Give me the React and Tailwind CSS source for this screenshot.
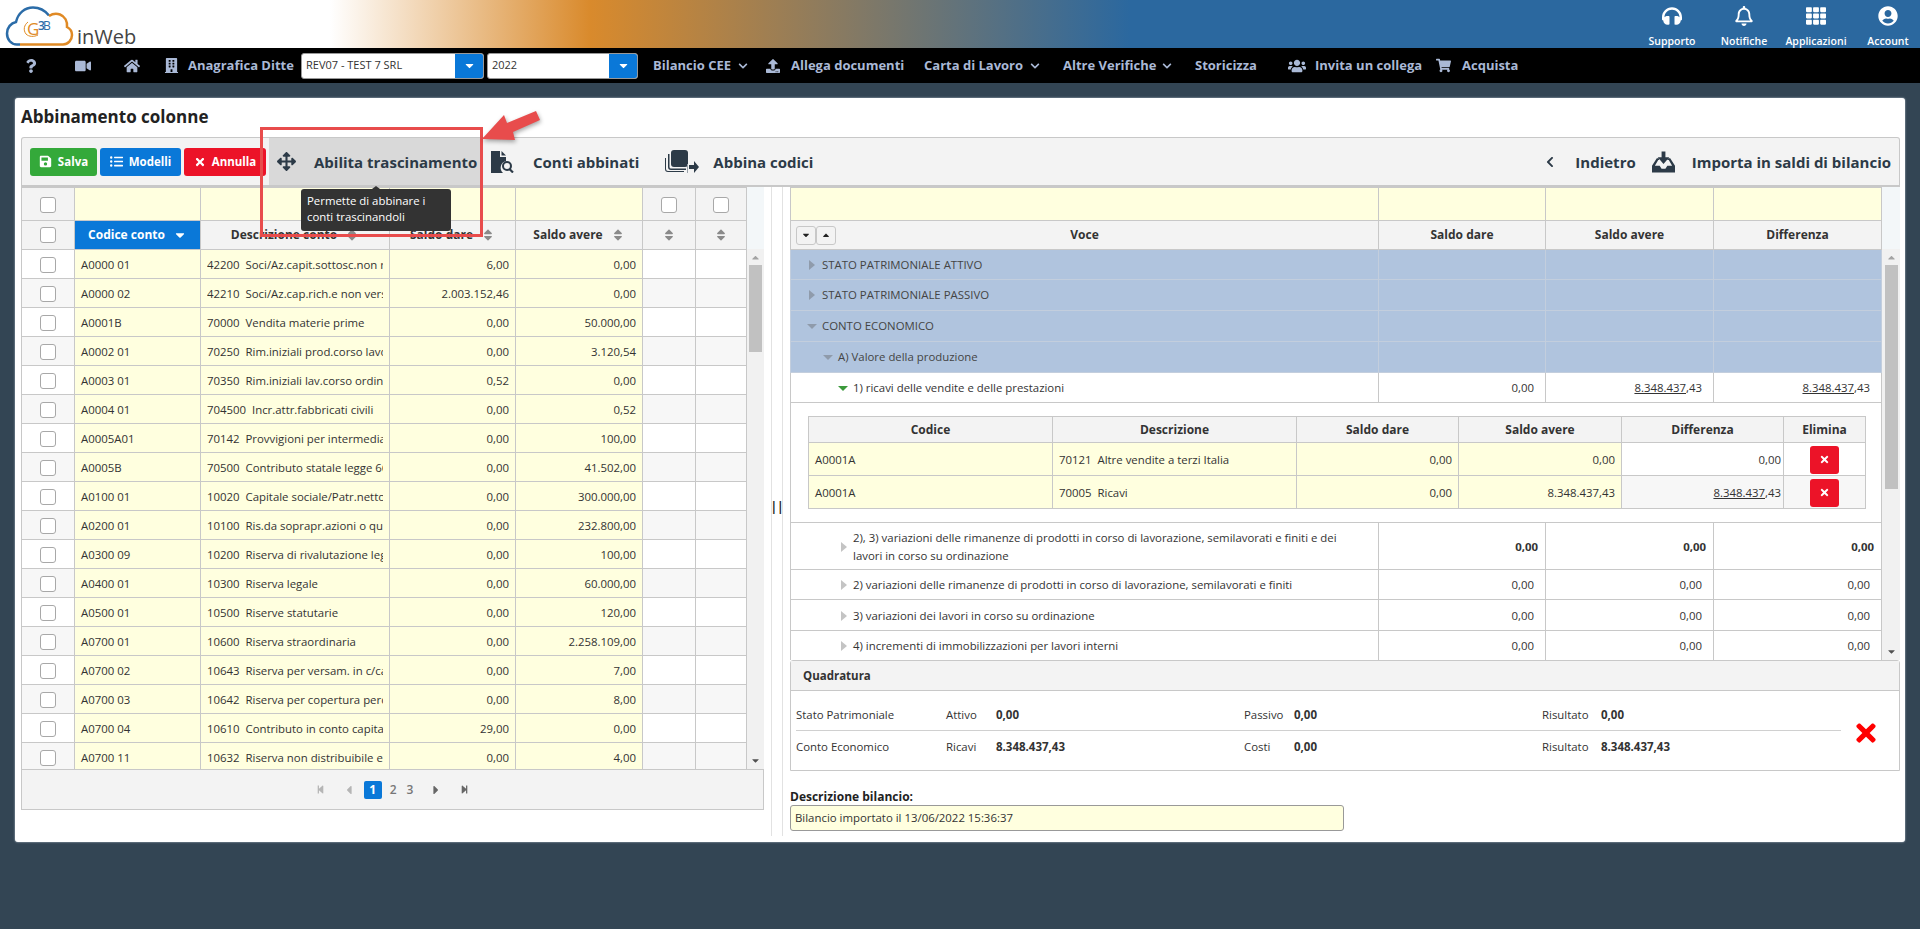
import {
  FaRegBell,
  FaBuilding,
  FaCaretDown,
  FaCaretLeft,
  FaCaretRight,
  FaCaretUp,
  FaChevronDown,
  FaChevronLeft,
  FaHome,
  FaQuestion,
  FaSave,
  FaShoppingCart,
  FaSort,
  FaStepBackward,
  FaStepForward,
  FaTh,
  FaTimes,
  FaUpload,
  FaUserCircle,
  FaUsers,
  FaVideo,
  FaListUl,
  FaArrowsAlt,
  FaHeadphones,
} from "react-icons/fa";

const accounts = [
  ["A0000 01", "42200  Soci/Az.capit.sottosc.non richiamato", "6,00", "0,00"],
  ["A0000 02", "42210  Soci/Az.cap.rich.e non versato", "2.003.152,46", "0,00"],
  ["A0001B", "70000  Vendita materie prime", "0,00", "50.000,00"],
  ["A0002 01", "70250  Rim.iniziali prod.corso lavorazione", "0,00", "3.120,54"],
  ["A0003 01", "70350  Rim.iniziali lav.corso ordinazione", "0,52", "0,00"],
  ["A0004 01", "704500  Incr.attr.fabbricati civili", "0,00", "0,52"],
  ["A0005A01", "70142  Provvigioni per intermediazione", "0,00", "100,00"],
  ["A0005B", "70500  Contributo statale legge 662", "0,00", "41.502,00"],
  ["A0100 01", "10020  Capitale sociale/Patr.netto", "0,00", "300.000,00"],
  ["A0200 01", "10100  Ris.da soprapr.azioni o quote", "0,00", "232.800,00"],
  ["A0300 09", "10200  Riserva di rivalutazione legge", "0,00", "100,00"],
  ["A0400 01", "10300  Riserva legale", "0,00", "60.000,00"],
  ["A0500 01", "10500  Riserve statutarie", "0,00", "120,00"],
  ["A0700 01", "10600  Riserva straordinaria", "0,00", "2.258.109,00"],
  ["A0700 02", "10643  Riserva per versam. in c/capitale", "0,00", "7,00"],
  ["A0700 03", "10642  Riserva per copertura perdite", "0,00", "8,00"],
  ["A0700 04", "10610  Contributo in conto capitale", "29,00", "0,00"],
  ["A0700 11", "10632  Riserva non distribuibile ex", "0,00", "4,00"],
];

const sections = [
  { label: "STATO PATRIMONIALE ATTIVO", pad: "pl-[31px]", open: false, h: "h-[30px]" },
  { label: "STATO PATRIMONIALE PASSIVO", pad: "pl-[31px]", open: false, h: "h-[31px]" },
  { label: "CONTO ECONOMICO", pad: "pl-[31px]", open: true, h: "h-[31px]" },
  { label: "A) Valore della produzione", pad: "pl-[47px]", open: true, h: "h-[31px]" },
];

const subRows = [
  { label: "2) variazioni delle rimanenze di prodotti in corso di lavorazione, semilavorati e finiti", h: "h-[30px]" },
  { label: "3) variazioni dei lavori in corso su ordinazione", h: "h-[31px]" },
  { label: "4) incrementi di immobilizzazioni per lavori interni", h: "h-[30px]" },
];

const Checkbox = () => (
  <span className="mx-auto block h-4 w-4 rounded-[3px] border border-[#a8a8a8] bg-white" />
);

const SortIcon = () => <FaSort className="shrink-0 text-[14px] text-[#8a8a8a]" />;

const Logo = () => (
  <div className="flex h-12 w-[150px] items-end">
    <svg viewBox="0 0 76 48" className="h-12 w-[76px] shrink-0">
      <path
        d="M20 44.500h-3C11 44.500 7 39.500 7 33.500c0-6 4-10.500 9-11.500C18 13 25 7.500 33 7.500c7 0 12 3 16 8"
        fill="none"
        stroke="#2b6ca8"
        strokeWidth="2.500"
      />
      <path
        d="M49 16c3-2 7-3 11-1.500 5 2 7.500 7 7 12.500 3 1.500 5 4.500 5 8 0 5-4 9.500-9 9.500H20"
        fill="none"
        stroke="#e08a25"
        strokeWidth="2.500"
      />
      <path d="M28 22c-4 3-5 8-2 12 3 3 8 3 12 1" fill="none" stroke="#e08a25" strokeWidth="1" />
      <text x="27" y="35" fontSize="17" fontFamily="Open Sans" fill="#e08a25">G</text>
      <text x="38" y="30" fontSize="12" fontWeight="600" fontFamily="Open Sans" fill="#2b6ca8">3</text>
      <text x="43" y="30" fontSize="12" fontFamily="Open Sans" fill="#2b6ca8">B</text>
    </svg>
    <span className="mb-[-1px] ml-[1px] text-[20px] leading-6 text-[#444]">inWeb</span>
  </div>
);

const TopAction = ({ icon, label }) => (
  <div className="flex w-16 flex-col items-center text-white">
    <span className="flex h-[22px] items-center text-[20px]">{icon}</span>
    <span className="mt-[6px] whitespace-nowrap text-[10.5px] font-semibold leading-4">{label}</span>
  </div>
);

const NavText = ({ className = "", children }) => (
  <span className={`whitespace-nowrap text-[13px] font-bold text-[#aab9d6] ${className}`}>{children}</span>
);

const Select = ({ value, width }) => (
  <div className={`flex h-[26px] ${width} overflow-hidden rounded-[3px] border border-[#999] bg-white`}>
    <span className="flex-1 self-center pl-[4px] text-[11px] text-[#333]">{value}</span>
    <span className="flex w-[28px] items-center justify-center bg-[#0a78d8] text-[13px] text-white">
      <FaCaretDown />
    </span>
  </div>
);

const ToolButton = ({ color, width, icon, children }) => (
  <button
    type="button"
    className={`flex h-7 ${width} items-center justify-center gap-[6px] rounded-[3px] text-[11.5px] font-bold text-white ${color}`}
  >
    {icon}
    {children}
  </button>
);

const ToolLink = ({ children, className = "" }) => (
  <span className={`mt-[2px] whitespace-nowrap text-[15px] font-bold text-[#2c3a47] ${className}`}>{children}</span>
);

const FileSearchIcon = () => (
  <svg viewBox="0 0 24 22" className="h-[22px] w-6 shrink-0 fill-[#2c3a47]">
    <path d="M0 0h9v6h6v4a7 7 0 0 0-3 12H0z" />
    <path d="M10.500 0v4.500H15z" />
    <circle cx="16" cy="15" r="4" fill="none" stroke="#2c3a47" strokeWidth="2" />
    <path d="M18.500 18l3.500 3.500" stroke="#2c3a47" strokeWidth="2.200" />
  </svg>
);

const CopyArrowIcon = () => (
  <svg viewBox="0 0 34 24" className="h-6 w-[34px] shrink-0 fill-[#2c3a47]">
    <rect x="6" y="0" width="17" height="17" rx="3" />
    <path d="M3 4v13a3 3 0 0 0 3 3h15v-1.500H6A1.500 1.500 0 0 1 4.500 17V4z" />
    <path d="M0 8v11a3 3 0 0 0 3 3h16v-1H3a2 2 0 0 1-2-2V8z" />
    <rect x="22" y="14" width="1" height="9" fill="#9aa2aa" />
    <path d="M24 15h5v-4l5 6-5 6v-4h-5z" />
  </svg>
);

const InboxInIcon = () => (
  <svg viewBox="0 0 24 22" className="h-[22px] w-[23px] shrink-0 fill-[#2c3a47]">
    <path d="M10 0h4v6h4l-6 7-6-7h4z" />
    <path d="M5 7h2.500v2H6.500L3 15h5l2 3h4l2-3h5l-3.500-6H16V7h3l5 8v7H0v-7z" />
  </svg>
);

const Scrollbar = ({ width, thumb }) => (
  <div className={`flex ${width} shrink-0 flex-col`}>
    <div className="h-[62px] bg-[#f3f7f9]" />
    <div className="flex flex-1 flex-col items-center bg-[#f1f1f1]">
      <FaCaretUp className="mt-[3px] h-[11px] text-[11px] text-[#a3a3a3]" />
      <div className={`mt-[2px] w-[13px] ${thumb} bg-[#c1c1c1]`} />
      <FaCaretDown className="mb-[3px] mt-auto h-[11px] text-[11px] text-[#505050]" />
    </div>
  </div>
);

// small tree arrows, drawn with borders like the jQuery treegrid ones
const TreeRight = ({ className = "" }) => (
  <span className={`absolute h-0 w-0 border-y-[5px] border-l-[6px] border-y-transparent ${className}`} />
);

const TreeDown = ({ className = "" }) => (
  <span className={`absolute h-0 w-0 border-x-[5px] border-t-[5px] border-x-transparent ${className}`} />
);

const cell = "border border-[#c8c8c8] px-[6px] pt-[1px] text-[11.4px] text-[#333]";
const yellow = "bg-[#ffffdf]";
const head = "border border-[#c8c8c8] bg-[#f3f3f3] text-[12px] font-bold text-[#333]";

const LeftTable = () => (
  <table className="w-full table-fixed border-collapse">
    <colgroup>
      <col className="w-[53px]" />
      <col className="w-[126px]" />
      <col className="w-[189px]" />
      <col className="w-[126px]" />
      <col className="w-[127px]" />
      <col className="w-[53px]" />
      <col className="w-[51px]" />
    </colgroup>
    <thead>
      <tr className="h-[33px]">
        <th className={`${cell} bg-[#f3f3f3]`}><Checkbox /></th>
        <th className={`${cell} ${yellow}`} />
        <th className={`${cell} ${yellow}`} />
        <th className={`${cell} ${yellow}`} />
        <th className={`${cell} ${yellow}`} />
        <th className={`${cell} bg-[#f3f3f3]`}><Checkbox /></th>
        <th className={`${cell} bg-[#f3f3f3]`}><Checkbox /></th>
      </tr>
      <tr className="h-[29px]">
        <th className={head}><Checkbox /></th>
        <th className="border border-[#c8c8c8] bg-[#0a78d8] text-[12px] font-bold text-white">
          <span className="flex items-center justify-center gap-2">
            Codice conto <FaCaretDown className="text-[14px]" />
          </span>
        </th>
        <th className={head}>
          <span className="flex items-center justify-center gap-2">Descrizione conto <SortIcon /></span>
        </th>
        <th className={head}>
          <span className="flex items-center justify-center gap-2">Saldo dare <SortIcon /></span>
        </th>
        <th className={head}>
          <span className="flex items-center justify-center gap-2">Saldo avere <SortIcon /></span>
        </th>
        <th className={head}><span className="flex justify-center"><SortIcon /></span></th>
        <th className={head}><span className="flex justify-center"><SortIcon /></span></th>
      </tr>
    </thead>
    <tbody>
      {accounts.map((row, i) => {
        const plain = i % 2 ? "bg-[#f7f7f7]" : "bg-white";
        return (
          <tr key={row[0]} className="h-[29px]">
            <td className={`${cell} ${plain}`}><Checkbox /></td>
            <td className={`${cell} ${yellow}`}>{row[0]}</td>
            <td className={`${cell} ${yellow}`}>
              <div className="overflow-hidden whitespace-pre">{row[1]}</div>
            </td>
            <td className={`${cell} ${yellow} text-right`}>{row[2]}</td>
            <td className={`${cell} ${yellow} text-right`}>{row[3]}</td>
            <td className={`${cell} ${plain}`} />
            <td className={`${cell} ${plain}`} />
          </tr>
        );
      })}
    </tbody>
  </table>
);

const Pager = () => (
  <div className="flex h-[41px] items-center justify-center border border-[#c8c8c8] bg-[#f3f3f3] text-[12px] font-semibold text-[#777]">
    <FaStepBackward className="text-[9px] text-[#b5b5b5]" />
    <FaCaretLeft className="ml-[17px] text-[14px] text-[#b5b5b5]" />
    <span className="ml-[8px] flex h-[18px] w-[18px] items-center justify-center rounded-[2px] bg-[#0a78d8] font-bold text-white">1</span>
    <span className="ml-[8px]">2</span>
    <span className="ml-[10px]">3</span>
    <FaCaretRight className="ml-[16px] text-[14px] text-[#666]" />
    <FaStepForward className="ml-[17px] text-[9px] text-[#666]" />
  </div>
);

const num = `${cell} text-right pr-[11px]`;

const RightTable = () => (
  <table className="w-full table-fixed border-collapse">
    <colgroup>
      <col className="w-[588px]" />
      <col className="w-[167px]" />
      <col className="w-[168px]" />
      <col className="w-[168px]" />
    </colgroup>
    <thead>
      <tr className="h-[33px]">
        <th className={`${cell} ${yellow}`} />
        <th className={`${cell} ${yellow}`} />
        <th className={`${cell} ${yellow}`} />
        <th className={`${cell} ${yellow}`} />
      </tr>
      <tr className="h-[29px]">
        <th className={`${head} px-[5px]`}>
          <div className="grid grid-cols-[1fr_auto_1fr] items-center">
            <div className="flex">
              <span className="flex h-[19px] w-[20px] items-center justify-center rounded-[3px] border border-[#c8c8c8] text-[10px] text-[#222]"><FaCaretDown /></span>
              <span className="flex h-[19px] w-[20px] items-center justify-center rounded-[3px] border border-[#c8c8c8] text-[10px] text-[#222]"><FaCaretUp /></span>
            </div>
            <span>Voce</span>
          </div>
        </th>
        <th className={head}>Saldo dare</th>
        <th className={head}>Saldo avere</th>
        <th className={head}>Differenza</th>
      </tr>
    </thead>
    <tbody>
      {sections.map((s) => (
        <tr key={s.label} className={`${s.h} bg-[#b0c4de]`}>
          <td className={`border border-[#c3cedd] text-[11.4px] text-[#444] ${s.pad}`}>
            <span className="relative">
              {s.open ? (
                <TreeDown className="left-[-15px] top-[6px] border-t-[#8f9bab]" />
              ) : (
                <TreeRight className="left-[-13px] top-[3px] border-l-[#8f9bab]" />
              )}
              {s.label}
            </span>
          </td>
          <td className="border border-[#c3cedd]" />
          <td className="border border-[#c3cedd]" />
          <td className="border border-[#c3cedd]" />
        </tr>
      ))}
      <tr className="h-[30px]">
        <td className={`${cell} pl-[62px]`}>
          <span className="relative">
            <TreeDown className="left-[-15px] top-[6px] border-t-[#3c9a3c]" />
            1) ricavi delle vendite e delle prestazioni
          </span>
        </td>
        <td className={num}>0,00</td>
        <td className={num}><u>8.348.437</u>,43</td>
        <td className={num}><u>8.348.437</u>,43</td>
      </tr>
      <tr className="h-[120px]">
        <td colSpan={4} className="border border-[#c8c8c8] pl-[17px] pr-[16px]">
          <table className="w-full table-fixed border-collapse">
            <colgroup>
              <col className="w-[244px]" />
              <col className="w-[244px]" />
              <col className="w-[162px]" />
              <col className="w-[163px]" />
              <col className="w-[162px]" />
              <col className="w-[82px]" />
            </colgroup>
            <thead>
              <tr className="h-[26px]">
                {["Codice", "Descrizione", "Saldo dare", "Saldo avere", "Differenza", "Elimina"].map((h) => (
                  <th key={h} className={head}>{h}</th>
                ))}
              </tr>
            </thead>
            <tbody>
              {[
                ["70121  Altre vendite a terzi Italia", "0,00", "0,00", "bg-white"],
                ["70005  Ricavi", "8.348.437,43", <><u>8.348.437</u>,43</>, "bg-[#f7f7f7]"],
              ].map((r) => (
                <tr key={r[0]} className="h-[33px]">
                  <td className={`${cell} ${yellow}`}>A0001A</td>
                  <td className={`${cell} ${yellow} whitespace-pre`}>{r[0]}</td>
                  <td className={`${cell} ${yellow} text-right`}>0,00</td>
                  <td className={`${cell} ${yellow} text-right`}>{r[1]}</td>
                  <td className={`${cell} ${r[3]} pr-[2px] text-right`}>{r[2]}</td>
                  <td className={`${cell} ${r[3]}`}>
                    <span className="mx-auto flex h-7 w-[29px] items-center justify-center rounded-[3px] bg-[#ec1328] text-[11px] text-white">
                      <FaTimes />
                    </span>
                  </td>
                </tr>
              ))}
            </tbody>
          </table>
        </td>
      </tr>
      <tr className="h-[47px]">
        <td className={`${cell} pl-[62px] pr-[35px]`}>
          <span className="relative block leading-[18px]">
            <TreeRight className="left-[-12px] top-[13px] border-l-[#c4c4c4]" />
            2), 3) variazioni delle rimanenze di prodotti in corso di lavorazione, semilavorati e finiti e dei lavori in corso su ordinazione
          </span>
        </td>
        <td className={`${cell} pr-[7px] text-right font-bold`}>0,00</td>
        <td className={`${cell} pr-[7px] text-right font-bold`}>0,00</td>
        <td className={`${cell} pr-[7px] text-right font-bold`}>0,00</td>
      </tr>
      {subRows.map((r) => (
        <tr key={r.label} className={r.h}>
          <td className={`${cell} pl-[62px]`}>
            <span className="relative">
              <TreeRight className="left-[-12px] top-[3px] border-l-[#c4c4c4]" />
              {r.label}
            </span>
          </td>
          <td className={num}>0,00</td>
          <td className={num}>0,00</td>
          <td className={num}>0,00</td>
        </tr>
      ))}
    </tbody>
  </table>
);

const QuadRow = ({ title, a, av, b, bv, rv, border }) => (
  <div className={`flex h-8 items-center text-[11.4px] text-[#333] ${border ? "border-b border-[#d0d0d0]" : ""}`}>
    <span className="w-[150px]">{title}</span>
    <span className="w-[50px]">{a}</span>
    <b className="w-[248px] text-[11.5px]">{av}</b>
    <span className="w-[50px]">{b}</span>
    <b className="w-[248px] text-[11.5px]">{bv}</b>
    <span className="w-[59px]">Risultato</span>
    <b className="text-[11.5px]">{rv}</b>
  </div>
);

const Quadratura = () => (
  <div className="h-[111px] rounded-t-[3px] border border-[#c8c8c8]">
    <div className="flex h-[30px] items-center border-b border-[#c8c8c8] bg-[#f3f3f3] pl-[12px] text-[11.5px] font-bold text-[#333]">
      Quadratura
    </div>
    <div className="flex pl-[5px] pt-[8px]">
      <div className="w-[1045px] shrink-0">
        <QuadRow title="Stato Patrimoniale" a="Attivo" av="0,00" b="Passivo" bv="0,00" rv="0,00" border />
        <QuadRow title="Conto Economico" a="Ricavi" av="8.348.437,43" b="Costi" bv="0,00" rv="8.348.437,43" />
      </div>
      <FaTimes className="ml-[11px] mt-[20px] text-[28px] text-[#ff0000]" />
    </div>
  </div>
);

export default function App() {
  return (
    <div className="relative min-h-screen overflow-hidden bg-[#334554] font-['Open_Sans',sans-serif]">
      {/* Top header */}
      <header className="flex h-12 items-start justify-between bg-[linear-gradient(90deg,#fff_0,#fff_330px,#d98a2c_590px,#2b689f_1130px,#2b689f_100%)]">
        <Logo />
        <div className="flex gap-2 pt-[5px]">
          <TopAction icon={<FaHeadphones />} label="Supporto" />
          <TopAction icon={<FaRegBell />} label="Notifiche" />
          <TopAction icon={<FaTh />} label="Applicazioni" />
          <TopAction icon={<FaUserCircle />} label="Account" />
        </div>
      </header>

      {/* Black menu */}
      <nav className="flex h-[35px] items-center bg-black text-[15px] text-[#aab9d6]">
        <FaQuestion className="ml-[24px] text-[14px]" />
        <FaVideo className="ml-[37px] text-[16px]" />
        <FaHome className="ml-[33px] text-[16px]" />
        <FaBuilding className="ml-[24px] text-[15px]" />
        <NavText className="ml-[9px] w-[107px]">Anagrafica Ditte</NavText>
        <Select value="REV07 - TEST 7 SRL" width="ml-[6px] w-[183px]" />
        <Select value="2022" width="ml-[3px] w-[151px]" />
        <NavText className="ml-[15px] w-[80px]">Bilancio CEE</NavText>
        <FaChevronDown className="ml-[5px] text-[10px]" />
        <FaUpload className="ml-[18px] text-[14px]" />
        <NavText className="ml-[11px] w-[115px]">Allega documenti</NavText>
        <NavText className="ml-[18px] w-[101px]">Carta di Lavoro</NavText>
        <FaChevronDown className="ml-[5px] text-[10px]" />
        <NavText className="ml-[23px] w-[94px]">Altre Verifiche</NavText>
        <FaChevronDown className="ml-[5px] text-[10px]" />
        <NavText className="ml-[23px] w-[63px]">Storicizza</NavText>
        <FaUsers className="ml-[30px] text-[18px]" />
        <NavText className="ml-[9px] w-[109px]">Invita un collega</NavText>
        <FaShoppingCart className="ml-[12px] text-[15px]" />
        <NavText className="ml-[11px]">Acquista</NavText>
      </nav>

      {/* Main card */}
      <main className="mx-[15px] mt-[15px] h-[744px] rounded-[3px] bg-white pl-[6px] pr-[5px] shadow-[0_0_2px_#cbd5de]">
        <h1 className="flex h-[39px] items-end pb-[8px] text-[17px] font-bold text-[#222]">Abbinamento colonne</h1>

        {/* Toolbar */}
        <div className="flex h-[50px] items-center rounded-t-[3px] border border-b-2 border-[#c8c8c8] bg-[#f3f3f3] pl-2 pr-2">
          <div className="flex gap-[3px]">
            <ToolButton color="bg-[#34a93a]" width="w-[67px]" icon={<FaSave className="text-[13px]" />}>Salva</ToolButton>
            <ToolButton color="bg-[#0a78d8]" width="w-[81px]" icon={<FaListUl className="text-[13px]" />}>Modelli</ToolButton>
            <ToolButton color="bg-[#ec1328]" width="w-[82px]" icon={<FaTimes className="text-[12px]" />}>Annulla</ToolButton>
          </div>
          <div className="ml-[3px] flex h-full w-[212px] items-center bg-[#d9d9d9] pl-2">
            <FaArrowsAlt className="text-[19px] text-[#2c3a47]" />
            <ToolLink className="ml-[18px]">Abilita trascinamento</ToolLink>
          </div>
          <span className="ml-[10px]"><FileSearchIcon /></span>
          <ToolLink className="ml-[18px]">Conti abbinati</ToolLink>
          <span className="ml-[26px]"><CopyArrowIcon /></span>
          <ToolLink className="ml-[14px]">Abbina codici</ToolLink>
          <FaChevronLeft className="ml-auto text-[12px] text-[#2c3a47]" />
          <ToolLink className="ml-[19px]">Indietro</ToolLink>
          <span className="ml-[16px]"><InboxInIcon /></span>
          <ToolLink className="ml-[17px]">Importa in saldi di bilancio</ToolLink>
        </div>

        <div className="flex">
          {/* Left side */}
          <section className="w-[743px] shrink-0">
            <div className="flex h-[582px] overflow-hidden">
              <div className="min-w-0 flex-1 overflow-hidden">
                <LeftTable />
              </div>
              <Scrollbar width="w-[17px]" thumb="h-[87px]" />
            </div>
            <Pager />
          </section>

          {/* Splitter */}
          <div className="flex h-[649px] w-[26px] shrink-0 justify-center">
            <div className="flex h-full w-3 items-center justify-center border-x border-[#e2e2e2]">
              <span className="mb-[10px] text-[12px] font-bold leading-none text-[#222]">||</span>
            </div>
          </div>

          {/* Right side */}
          <section className="min-w-0 flex-1">
            <div className="flex h-[473px] overflow-hidden">
              <div className="min-w-0 flex-1 overflow-hidden">
                <RightTable />
              </div>
              <Scrollbar width="w-[18px]" thumb="h-[224px]" />
            </div>
            <Quadratura />
            <label className="mt-[19px] block text-[12px] font-bold leading-[14px] text-[#222]">Descrizione bilancio:</label>
            <div className="mt-[1px] flex h-[26px] w-[554px] items-center rounded-[3px] border border-[#999] bg-[#ffffdf] pl-[4px] text-[11.4px] text-[#333]">
              Bilancio importato il 13/06/2022 15:36:37
            </div>
          </section>
        </div>
      </main>

      {/* Annotation and tooltip over the page */}
      <div className="absolute left-[260px] top-[127px] z-20 h-[110px] w-[223px] border-[3px] border-[#e84c4c]" />
      <svg viewBox="0 0 70 45" className="absolute left-[478px] top-[105px] z-20 h-[45px] w-[70px] drop-shadow-[1px_2px_2px_rgba(0,0,0,0.35)]">
        <polygon points="4,34 26,10 29,18 58,6 62,15 35,27 37,35" fill="#e84c4c" />
      </svg>
      <div className="absolute left-[301px] top-[189px] z-10 h-[42px] w-[150px] rounded-[3px] bg-[#333] px-[6px] py-[4px] text-[11.4px] leading-[16px] text-white">
        <span className="absolute left-[71px] top-[-3px] h-0 w-0 border-x-[4px] border-b-[3px] border-x-transparent border-b-[#333]" />
        Permette di abbinare i conti trascinandoli
      </div>
    </div>
  );
}
